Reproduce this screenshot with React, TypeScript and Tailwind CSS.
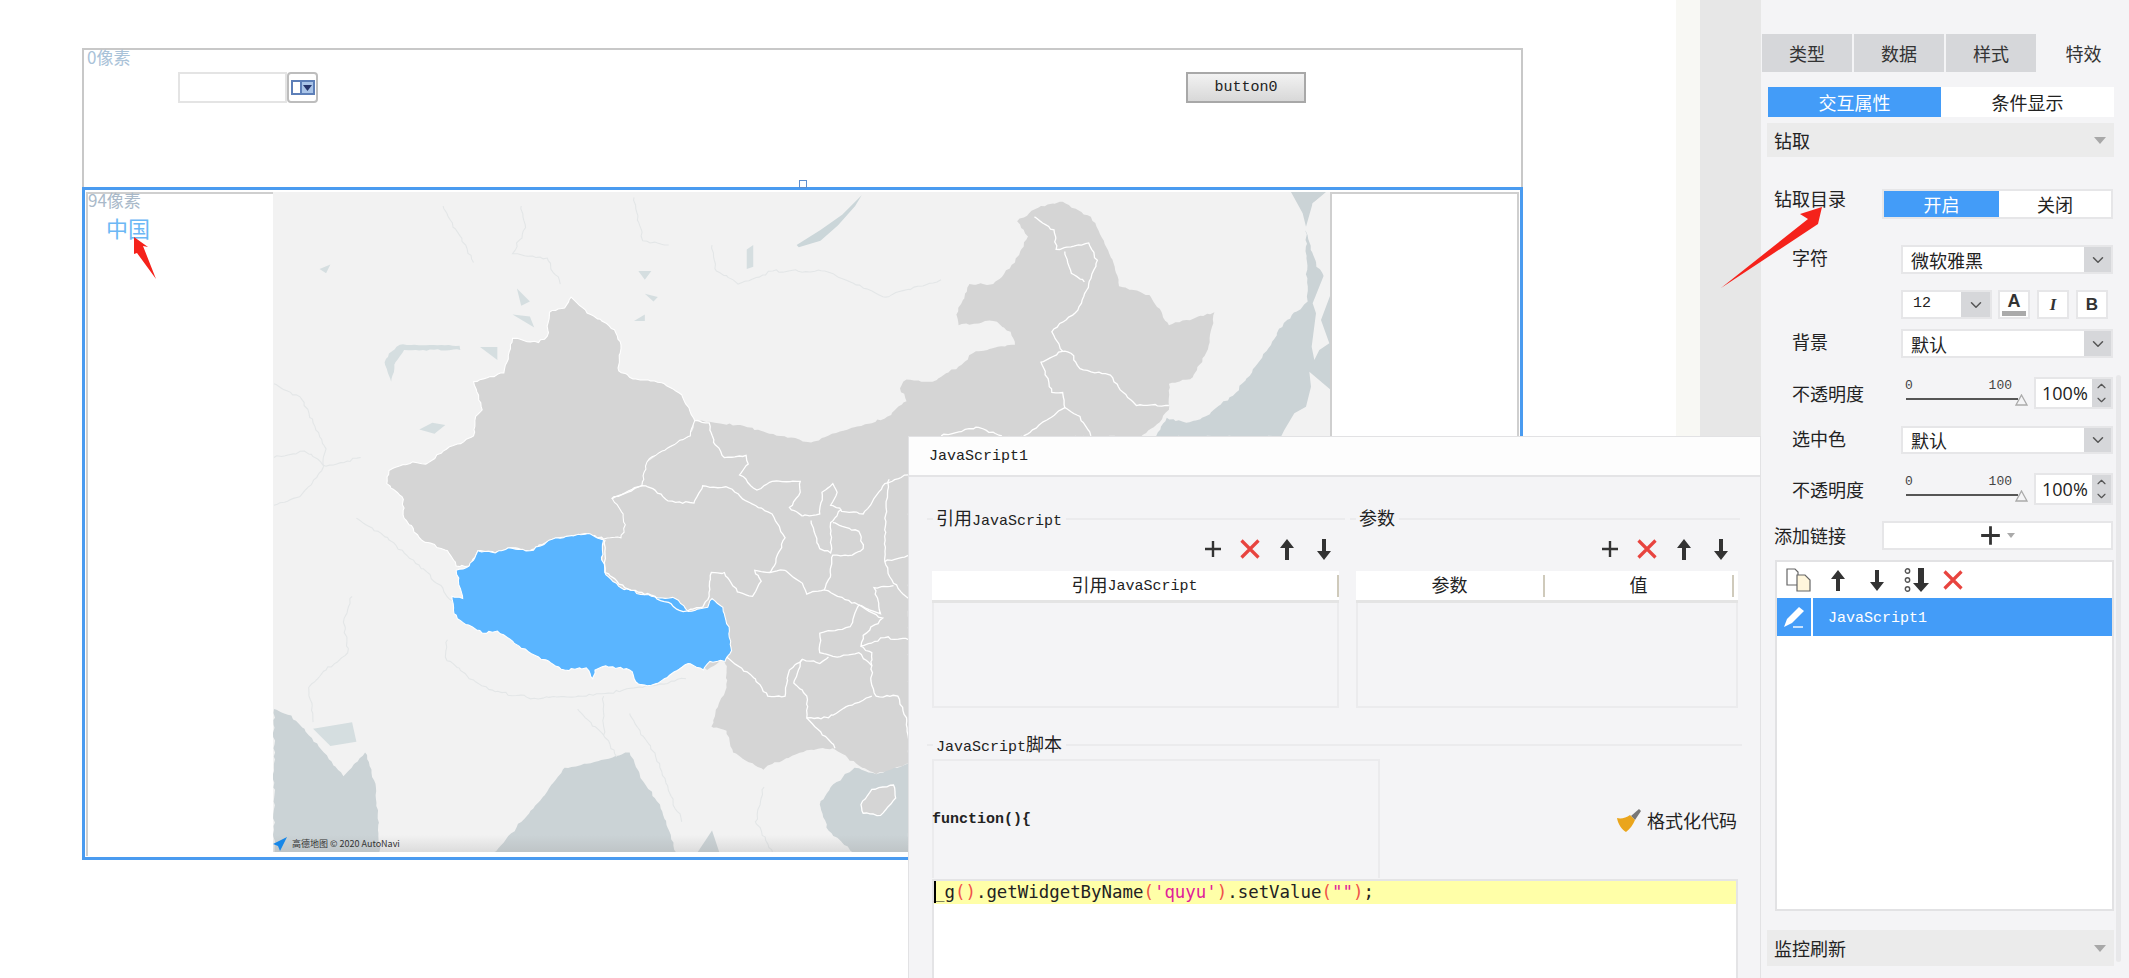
import { ChevronDown, ChevronUp } from "lucide-react";

const mono = "font-['Liberation_Mono','Noto_Sans_CJK_SC',monospace] text-[15px]";
const field = "border-2 border-[#e6e6e8] bg-white";

// turns a rough outline into a jagged map border, same result on every render
function rough(points: string, closed = false, amp = 2.5) {
  const n = points.trim().split(/\s+/).map(Number);
  const pts: number[][] = [];
  for (let i = 0; i < n.length; i += 2) pts.push([n[i], n[i + 1]]);
  if (closed) pts.push(pts[0]);
  let seed = 1;
  let d = `M${pts[0][0]} ${pts[0][1]}`;
  for (let i = 1; i < pts.length; i++) {
    const [ax, ay] = pts[i - 1];
    const [bx, by] = pts[i];
    const steps = Math.max(1, Math.ceil(Math.hypot(bx - ax, by - ay) / 9));
    for (let s = 1; s <= steps; s++) {
      const t = s / steps;
      seed += 1;
      const r1 = Math.sin(seed * 12.9898) * 43758.5453;
      const r2 = Math.sin(seed * 78.233) * 12543.123;
      const jx = s === steps ? 0 : (r1 - Math.floor(r1) - 0.5) * 2 * amp;
      const jy = s === steps ? 0 : (r2 - Math.floor(r2) - 0.5) * 2 * amp;
      d += `L${(ax + (bx - ax) * t + jx).toFixed(1)} ${(ay + (by - ay) * t + jy).toFixed(1)}`;
    }
  }
  return closed ? d + "Z" : d;
}

const xinjiang =
  "715 270 760 310 815 345 830 380 825 440 850 455 930 470 970 495 1000 555 990 590 960 605 925 625 890 650 878 705 810 735 835 770 840 795 830 825 790 828 755 815 680 825 620 855 570 848 540 860 500 855 480 890 450 890 430 855 370 830 330 780 325 730 290 700 295 670 350 650 380 655 420 625 490 590 495 545 510 530 490 465 560 445 580 365 640 375 660 360 665 305 700 295";
const tibet =
  "755 815 790 830 785 870 795 910 830 940 900 960 955 965 985 995 1030 985 1040 965 1065 985 1080 1040 1085 1085 1070 1110 1035 1110 1020 1130 985 1115 930 1150 900 1165 870 1162 850 1130 795 1120 770 1130 765 1150 750 1125 700 1130 640 1100 600 1080 545 1040 510 1045 465 1020 445 1000 440 960 465 965 450 900 480 890 500 855 540 860 570 848 620 855 680 825";
const chinaEast =
  "-180 830 -160 735 -90 705 -78 650 -43 625 -8 605 22 590 32 555 130 565 230 590 300 605 400 570 470 550 520 510 505 480 520 460 580 465 640 430 680 395 770 380 760 350 720 325 640 335 635 310 665 240 720 240 770 190 800 130 775 95 830 60 880 50 945 85 975 140 1000 200 1010 245 1080 265 1110 310 1125 335 1230 305 1215 390 1180 455 1125 470 1125 530 1090 570 1060 592 525 592 525 1345 450 1370 410 1350 350 1310 290 1315 200 1350 190 1360 165 1345 120 1320 105 1270 70 1260 85 1215 105 1170 105 1130 100 1100 60 1130 -30 1000 -180 960";

const provinces = [
  "32 555 65 560 75 605 100 640 150 635 155 655 135 680 175 715 210 695 275 695 275 720 250 755 280 775",
  "-160 735 -90 705 -60 715 -30 740 30 745 50 705 110 710 150 740 210 770 240 825 215 890 205 905",
  "-175 830 -175 905 -130 940 -60 960 5 995 50 985 65 960 70 905 100 905 130 950 165 960 185 925 170 900 205 905 240 900",
  "240 900 280 930 290 955 330 945 410 980 390 1030 320 1045 320 1090 360 1100 410 1090 440 1120 440 1165 450 1190 500 1190 520 1240 525 1290",
  "105 1100 160 1140 200 1190 240 1190 250 1130 280 1105 320 1115 340 1100",
  "280 1105 260 1160 290 1190 290 1240 340 1240 380 1215 440 1190",
  "290 1240 340 1290 355 1310",
  "280 775 320 770 325 720 350 700 360 720 345 750 380 765 420 770 470 700 525 680",
  "300 785 320 850 345 860 345 790 370 760",
  "480 690 470 780 470 880 490 930 525 965",
  "470 880 525 865",
  "350 790 410 810 420 850 395 865 350 865 345 910 330 945",
  "410 980 460 1000 445 940 490 935",
  "410 980 465 1010 420 1050 415 1075 470 1055 525 1060",
  "440 1120 440 1090 415 1075",
  "815 85 860 115 865 160 940 145 960 185 940 240 915 300 855 350 880 395 900 400 920 435 990 450 1020 490 1050 520 1125 520",
  "885 165 900 215 930 235",
  "880 395 830 420 855 490 880 490 885 525 790 590",
  "885 525 920 545 945 590",
  "600 590 680 570 740 590",
];

const rivers = [
  "30 470 90 500 120 560 150 620 140 670 90 730 30 750",
  "220 780 270 810 330 860 390 910 440 970",
  "430 1060 425 1100 480 1150 540 1180 630 1195 750 1190 880 1170 980 1150",
  "210 960 190 1020 200 1090 150 1130 110 1170 120 1250",
  "790 1190 790 1280 820 1330",
  "730 1220 790 1280",
  "850 1230 910 1330 970 1480",
  "420 60 490 190",
  "600 60 610 110 580 170 660 180 690 240",
  "860 40 880 140 940 150",
  "1040 150 1050 210 1100 240 1180 210 1300 210 1440 270 1568 230",
  "30 640 100 625 150 660 230 640",
  "1100 1130 1080 1220 1050 1250",
  "1160 1400 1140 1480 1180 1552",
];

function Plus({ size = 18 }: { size?: number }) {
  return (
    <svg width={size} height={size} viewBox="0 0 18 18">
      <path d="M9 1v16M1 9h16" stroke="#333" strokeWidth="2.4" />
    </svg>
  );
}

function Cross() {
  return (
    <svg width="20" height="20" viewBox="0 0 20 20">
      <path d="M1.5 1.500l17 17M18.500 1.500l-17 17" stroke="#e8443f" strokeWidth="3.2" />
    </svg>
  );
}

function ArrowUp() {
  return (
    <svg width="16" height="21" viewBox="0 0 16 21">
      <path d="M8 0l7 9H10v12H6V9H1z" fill="#333" />
    </svg>
  );
}

function ArrowDown() {
  return (
    <svg width="16" height="21" viewBox="0 0 16 21">
      <path d="M8 21l7-9H10V0H6v12H1z" fill="#333" />
    </svg>
  );
}

function MoveBottom() {
  return (
    <svg width="26" height="24" viewBox="0 0 26 24">
      <circle cx="3.500" cy="3" r="2.200" fill="none" stroke="#555" strokeWidth="1.400" />
      <circle cx="3.500" cy="12" r="2.200" fill="none" stroke="#555" strokeWidth="1.400" />
      <circle cx="3.500" cy="21" r="2.200" fill="none" stroke="#555" strokeWidth="1.400" />
      <path d="M17 24l8-9h-5V0h-6v15H9z" fill="#333" />
    </svg>
  );
}

function CopyIcon() {
  return (
    <svg width="25" height="24" viewBox="0 0 25 24">
      <path d="M1 1h8l3 3v13H1z" fill="#fff" stroke="#666" strokeWidth="1.200" />
      <path d="M11 7h8l5 5v11H11z" fill="#fff6dc" stroke="#666" strokeWidth="1.200" />
    </svg>
  );
}

function Pencil() {
  return (
    <svg width="22" height="22" viewBox="0 0 22 22">
      <path d="M16 1l5 4L9 17l-8 4 3-8z" fill="#fff" />
      <path d="M10 21h10" stroke="#fff" strokeWidth="1.400" />
    </svg>
  );
}

function Brush() {
  return (
    <svg width="24" height="23" viewBox="0 0 24 23">
      <path d="M14 7l8-7 2 2-6 9z" fill="#777" />
      <path d="M0 9c4 1 9 0 13-3l5 5c-2 5-5 9-9 12C5 21 1 15 0 9z" fill="#eaa51c" />
    </svg>
  );
}

function Caret() {
  return (
    <svg width="12" height="7" viewBox="0 0 12 7">
      <path d="M0 0h12L6 7z" fill="#a8a8a8" />
    </svg>
  );
}

function Legend({ children, trail }: { children: React.ReactNode; trail: string }) {
  return (
    <div className={`flex items-center h-[18px] ${trail}`}>
      <div className="w-[6px] h-[2px] bg-[#ebebed]" />
      <div className={`${mono} ml-[3px] mr-[4px] pt-[3px] leading-[18px] text-[#222] whitespace-nowrap`}>{children}</div>
      <div className="flex-1 h-[2px] bg-[#ebebed]" />
    </div>
  );
}

function ToolRow({ className }: { className: string }) {
  return (
    <div className={`flex items-center h-[22px] ${className}`}>
      <div className="w-[37px] flex justify-center"><Plus /></div>
      <div className="w-[37px] flex justify-center"><Cross /></div>
      <div className="w-[37px] flex justify-center"><ArrowUp /></div>
      <div className="w-[37px] flex justify-center"><ArrowDown /></div>
    </div>
  );
}

function Select({ value }: { value: string }) {
  return (
    <div className={`${field} w-[212px] h-full flex items-center justify-between ml-[140px]`}>
      <span className="pl-[8px] text-[18px] leading-none">{value}</span>
      <div className="w-[27px] h-full bg-[#d6d7da] flex items-center justify-center">
        <ChevronDown size={18} color="#555" />
      </div>
    </div>
  );
}

function LabeledSelect({ label, value, className }: { label: string; value: string; className: string }) {
  return (
    <div className={`relative flex ${className}`}>
      <span className="absolute left-[31px] top-[1px] text-[18px] leading-[22px]">{label}</span>
      <Select value={value} />
    </div>
  );
}

function OpacityRow({ className }: { className: string }) {
  return (
    <div className={`flex h-[32px] ${className}`}>
      <span className="ml-[31px] w-[112px] text-[18px] leading-[32px]">不透明度</span>
      <div className="w-[130px] h-full relative">
        <div className="flex justify-between w-[108px] pl-[1px] text-[13px] leading-[14px] text-[#444] font-['Liberation_Mono',monospace] pt-[2px]">
          <span>0</span>
          <span>100</span>
        </div>
        <div className="absolute left-[2px] top-[21px] w-[112px] h-[2px] bg-[#555]" />
        <svg className="absolute left-[111px] top-[17px]" width="13" height="12" viewBox="0 0 13 12">
          <path d="M6.500 1L12 11H1z" fill="#f4f4f6" stroke="#aaa" strokeWidth="1.300" />
        </svg>
      </div>
      <div className="w-[79px] h-full flex border-2 border-[#e6e6e8] bg-white">
        <span className="flex-1 pl-[6px] text-[18px] leading-[28px] text-[#222] font-['Open_Sans',sans-serif]">100%</span>
        <div className="w-[19px] bg-[#d6d7da] flex flex-col items-center justify-center">
          <ChevronUp size={15} color="#555" />
          <ChevronDown size={15} color="#555" />
        </div>
      </div>
    </div>
  );
}

function ChinaMap() {
  return (
    <svg className="block w-full h-full" viewBox="272 192 1057 660" preserveAspectRatio="none">
      <defs>
        <linearGradient id="mapFade" x1="0" y1="0" x2="0" y2="1">
          <stop offset="0" stopColor="#9a9a9a" stopOpacity="0" />
          <stop offset="1" stopColor="#9a9a9a" stopOpacity="0.25" />
        </linearGradient>
      </defs>
      <rect x="272" y="192" width="1057" height="660" fill="#f2f2f2" />
      <g transform="translate(260 180) scale(0.4337)">
        {/* seas */}
        <path d={rough("30 1220 70 1235 110 1280 145 1320 190 1375 240 1320 265 1400 275 1560 30 1560", true)} fill="#cbd3d6" />
        <path d={rough("530 1560 600 1480 660 1410 700 1355 760 1345 850 1320 880 1385 920 1440 945 1510 960 1560", true)} fill="#cbd3d6" />
        <path d="M1000 1560l40-60 20 60z" fill="#cbd3d6" />
        {/* lakes */}
        <path d="M1235 150L1290 115 1340 80 1385 35 1370 60 1330 105 1290 140 1240 155z" fill="#cbd6d9" />
        <path d={rough("285 420 300 465 310 420 330 392 460 392 458 382 320 380 295 400", true, 1.500)} fill="#d5dee0" />
        <path d="M365 575l30-15 30 5-25 20zM580 310l50 30-10-25zM590 250l30 30-20 10zM870 210l30 0-15 20zM135 205l25-10-10 20zM1120 160l15-10 0 50-15 5zM860 325l25-15 0 15zM885 262l30 8-10 10zM505 385l40 30 0-30zM120 1265l90-15 10 45-60 10z" fill="#d5dee0" />
        {/* rivers and neighbour borders */}
        <g fill="none" stroke="#e3e6e7" strokeWidth="2.500">
          {rivers.map((r) => (
            <path key={r} d={rough(r, false, 3)} />
          ))}
        </g>
      </g>
      <g transform="translate(680 180) scale(0.4337)">
        {/* east seas */}
        <path d={rough("1440 110 1465 200 1500 240 1500 592 1095 592 1120 548 1165 560 1210 545 1280 490 1340 410 1390 330 1445 280", true)} fill="#cbd3d6" />
        <path d={rough("320 1440 345 1400 400 1355 450 1370 525 1345 525 1560 410 1560 340 1500", true)} fill="#cbd3d6" />
        {/* China */}
        <path d={rough(chinaEast, true)} fill="#d5d5d5" />
        <path d={rough("415 1440 440 1405 490 1395 495 1425 460 1465 420 1460", true, 1.500)} fill="#d5d5d5" stroke="#fff" strokeWidth="3" />
      </g>
      <g transform="translate(1280 180) scale(0.3333)" fill="#f2f2f2">
        <path fill="#cbd3d6" d="M30 36H135L95 70 75 140 65 100z" />
        <path d="M95 70L85 140 105 190 135 270 95 370 105 400 92 500 100 540 115 510 145 490 120 420 150 340V36H140z" />
        <path d="M85 575L150 630V770H0L10 750 40 700 75 680 90 620z" />
      </g>
      <g transform="translate(260 180) scale(0.4337)">
        <path d={rough(xinjiang, true)} fill="#d5d5d5" stroke="#fff" strokeWidth="2.500" />
        <path d={rough(tibet, true)} fill="#5ab5ff" stroke="#fff" strokeWidth="2.500" />
      </g>
      <g transform="translate(680 180) scale(0.4337)" fill="none" stroke="#fff" strokeWidth="3">
        {provinces.map((p) => (
          <path key={p} d={rough(p)} />
        ))}
      </g>
      <rect x="272" y="835" width="1057" height="17" fill="url(#mapFade)" />
    </svg>
  );
}

function Canvas() {
  return (
    <div className="w-[1676px] shrink-0 pt-[48px] pl-[82px]">
      <div className="relative w-[1441px] h-[139px] border-t-2 border-x-2 border-[#c8c8c8] pl-[94px] pt-[22px] flex items-start">
        <span className="absolute left-[3px] top-[-3px] text-[17px] leading-[20px] text-[#a9c2d8]">0像素</span>
        <div className="w-[109px] h-[31px] border-2 border-[#e4e4e4]" />
        <div className="w-[31px] h-[31px] border-2 border-[#bdbdbd] rounded-[4px] flex items-center justify-center">
          <div className="w-[24px] h-[15px] border-2 border-[#5d7fb8] flex">
            <div className="w-[9px] bg-white border-r-2 border-[#5d7fb8]" />
            <div className="flex-1 bg-[#a9c4e8] flex items-center justify-center">
              <svg width="9" height="6" viewBox="0 0 9 6"><path d="M0 0h9L4.500 6z" fill="#26356b" /></svg>
            </div>
          </div>
        </div>
        <div className={`${mono} ml-[868px] w-[120px] h-[31px] border-2 border-[#a8a8a8] bg-gradient-to-b from-[#f2f2f2] to-[#d8d8d8] text-center leading-[28px] text-[#222]`}>
          button0
        </div>
        <div className="absolute left-[715px] bottom-[-1px] w-[8px] h-[8px] border border-[#5d8fd0] bg-white" />
      </div>
      <div className="w-[1441px] h-[673px] border-[3px] border-[#4a9bf0] flex bg-white">
        <div className="relative w-[188px] border-l-2 border-t-2 border-[#cfcfcf] ml-[1px] mt-[2px] mb-[1px]">
          <span className="absolute left-[0px] top-[-4px] text-[17px] leading-[20px] text-[#a9b9c9]">94像素</span>
          <span className="absolute left-[18px] top-[19px] text-[22px] leading-[28px] text-[#6cb8f5]">中国</span>
        </div>
        <div className="relative w-[1057px] mt-[2px] mb-[5px] -ml-[1px]">
          <ChinaMap />
          <div className="absolute left-0 bottom-[1px] flex items-center gap-[5px]">
            <svg width="14" height="14" viewBox="0 0 14 14"><path d="M14 0L0 7l5 2 2 5z" fill="#1787e8" /></svg>
            <span className="text-[9px] leading-[12px] text-[#333]">高德地图 © 2020 AutoNavi</span>
          </div>
        </div>
        <div className="flex-1 border-2 border-[#cfcfcf] mt-[2px] mb-[1px] mr-[1px]" />
      </div>
    </div>
  );
}

function Panel() {
  return (
    <div className="flex-1 bg-[#f4f4f6] pt-[34px] relative">
      <div className="flex gap-[2px] h-[38px] pl-[1px] text-[18px] text-[#333] text-center leading-[38px]">
        <div className="w-[90px] bg-[#d6d7da]">类型</div>
        <div className="w-[90px] bg-[#d6d7da]">数据</div>
        <div className="w-[90px] bg-[#d6d7da]">样式</div>
        <div className="w-[91px]">特效</div>
      </div>
      <div className="flex ml-[7px] w-[346px] h-[30px] mt-[15px] text-[18px] text-center leading-[30px]">
        <div className="flex-1 bg-[#439cf8] text-white">交互属性</div>
        <div className="flex-1 bg-white text-[#222]">条件显示</div>
      </div>
      <div className="flex items-center justify-between ml-[6px] w-[347px] h-[34px] mt-[6px] bg-[#ebebeb] pl-[7px] pr-[8px] text-[18px] text-[#222]">
        <span>钻取</span>
        <Caret />
      </div>
      <div className="flex h-[30px] mt-[32px] ml-[13px] text-[18px]">
        <span className="w-[108px] leading-[18px] text-[#222]">钻取目录</span>
        <div className="w-[231px] flex border-2 border-[#e6e6e8] text-center leading-[26px]">
          <div className="w-[115px] bg-[#439cf8] text-white">开启</div>
          <div className="flex-1 bg-white text-[#222]">关闭</div>
        </div>
      </div>
      <LabeledSelect label="字符" value="微软雅黑" className="h-[29px] mt-[26px]" />
      <div className="flex h-[29px] mt-[16px] ml-[140px] gap-[6px]">
        <div className={`${field} w-[91px] flex items-center justify-between`}>
          <span className="pl-[10px] text-[15px] font-['Liberation_Mono',monospace] text-[#222]">12</span>
          <div className="w-[29px] h-full bg-[#d6d7da] flex items-center justify-center"><ChevronDown size={18} color="#555" /></div>
        </div>
        <div className={`${field} w-[32px] flex flex-col items-center leading-none`}>
          <span className="text-[18px] font-bold font-['Liberation_Sans',sans-serif] leading-[18px] text-[#333]">A</span>
          <div className="w-[24px] h-[5px] bg-[#aaa] mt-[1px]" />
        </div>
        <div className={`${field} ml-[1px] w-[32px] flex items-center justify-center text-[17px] italic font-bold font-['Liberation_Serif',serif] text-[#333]`}>I</div>
        <div className={`${field} ml-[1px] w-[32px] flex items-center justify-center text-[17px] font-bold font-['Liberation_Sans',sans-serif] text-[#333]`}>B</div>
      </div>
      <LabeledSelect label="背景" value="默认" className="h-[29px] mt-[10px]" />
      <OpacityRow className="mt-[19px]" />
      <LabeledSelect label="选中色" value="默认" className="h-[28px] mt-[17px]" />
      <OpacityRow className="mt-[19px]" />
      <div className="flex h-[29px] mt-[16px] ml-[13px] text-[18px]">
        <span className="w-[108px] leading-[29px] text-[#222]">添加链接</span>
        <div className={`${field} w-[231px] flex items-center justify-center gap-[6px]`}>
          <Plus size={21} />
          <svg width="8" height="5" viewBox="0 0 8 5"><path d="M0 0h8L4 5z" fill="#aaa" /></svg>
        </div>
      </div>
      <div className="ml-[14px] w-[339px] h-[351px] mt-[10px] border-2 border-[#e2e2e4] bg-white">
        <div className="flex items-center h-[36px] pl-[9px]">
          <div className="w-[39px]"><CopyIcon /></div>
          <div className="w-[39px] pl-[5px]"><ArrowUp /></div>
          <div className="w-[39px] pl-[5px]"><ArrowDown /></div>
          <div className="w-[40px] pl-[1px]"><MoveBottom /></div>
          <Cross />
        </div>
        <div className="flex h-[38px] bg-[#439cf8] text-white">
          <div className="w-[36px] border-r-2 border-white flex items-center justify-center"><Pencil /></div>
          <span className={`${mono} pl-[15px] leading-[41px]`}>JavaScript1</span>
        </div>
      </div>
      <div className="flex items-center justify-between ml-[6px] w-[347px] h-[36px] mt-[19px] bg-[#ebebeb] pl-[7px] pr-[8px] text-[18px] text-[#222]">
        <span>监控刷新</span>
        <Caret />
      </div>
      {/* panel scrollbar */}
      <div className="absolute left-[355px] top-[375px] w-[5px] h-[587px] rounded-full bg-[#e8e8ea]" />
    </div>
  );
}

function HeaderCell({ children, className }: { children: React.ReactNode; className: string }) {
  return (
    <div className={`${mono} flex items-center justify-center h-[22px] pt-[3px] border-r-2 border-[#cfcabb] ${className}`}>
      {children}
    </div>
  );
}

function ScriptDialog() {
  return (
    <div className="absolute left-[908px] top-[436px] w-[853px] h-[542px] bg-[#f4f4f6] border-l border-t border-r border-[#e2e2e4] overflow-hidden text-[#222]">
      <div className={`${mono} h-[40px] bg-[#fdfdfd] border-b-2 border-[#e4e4e6] pl-[20px] leading-[40px]`}>JavaScript1</div>
      <div className="pt-[33px]">
        <div className="flex">
          <div className="w-[441px]">
            <Legend trail="ml-[18px] w-[418px]"><span className="text-[18px]">引用</span>JavaScript</Legend>
            <ToolRow className="justify-end w-[433px] mt-[10px]" />
            <div className="ml-[23px] w-[407px] mt-[11px]">
              <div className="h-[32px] bg-white border-b-[3px] border-[#e4e4e4] flex items-center">
                <HeaderCell className="flex-1"><span className="text-[18px]">引用</span>JavaScript</HeaderCell>
              </div>
              <div className="h-[105px] border-2 border-t-0 border-[#ebebed]" />
            </div>
          </div>
          <div className="flex-1">
            <Legend trail="w-[390px]"><span className="text-[18px]">参数</span></Legend>
            <ToolRow className="justify-end w-[389px] mt-[10px]" />
            <div className="ml-[6px] w-[382px] mt-[11px]">
              <div className="h-[32px] bg-white border-b-[3px] border-[#e4e4e4] flex items-center">
                <HeaderCell className="w-[189px]"><span className="text-[18px]">参数</span></HeaderCell>
                <HeaderCell className="w-[189px]"><span className="text-[18px]">值</span></HeaderCell>
              </div>
              <div className="h-[105px] border-2 border-t-0 border-[#ebebed]" />
            </div>
          </div>
        </div>
        <div className="mt-[28px]">
          <Legend trail="ml-[18px] w-[815px]">JavaScript<span className="text-[18px]">脚本</span></Legend>
        </div>
        <div className="ml-[23px] w-[805px] flex h-[119px] mt-[5px]">
          <div className={`${mono} w-[448px] border-2 border-b-0 border-[#ebebed] flex items-center leading-none font-bold`}>
            <span className="-ml-[2px]">function(){"{"}</span>
          </div>
          <div className="flex-1 flex items-center justify-end gap-[6px] text-[18px] pt-[3px]">
            <Brush />
            <span>格式化代码</span>
          </div>
        </div>
        <div className="ml-[23px] w-[806px] h-[120px] mt-[1px] bg-white border-2 border-[#e4e4e6]">
          <div className="relative h-[23px] bg-[#ffffa8] text-[17.4px] leading-[23px] whitespace-nowrap text-[#222] font-['DejaVu_Sans_Mono',monospace]">
            <span className="absolute left-0 top-0 w-[2px] h-[22px] bg-black" />
            _g<span className="text-[#f0524a]">()</span>.getWidgetByName<span className="text-[#f0524a]">(</span>
            <span className="text-[#e0209a]">'quyu'</span>
            <span className="text-[#f0524a]">)</span>.setValue<span className="text-[#f0524a]">(</span>
            <span className="text-[#e0209a]">""</span>
            <span className="text-[#f0524a]">)</span>;
          </div>
        </div>
      </div>
    </div>
  );
}

export default function App() {
  return (
    <div className="relative w-[2129px] h-[978px] overflow-hidden bg-white flex text-[#222] font-['Noto_Sans_CJK_SC',sans-serif]">
      <Canvas />
      <div className="w-[24px] bg-[#f8f8f4]" />
      <div className="w-[61px] bg-[#e7e7e7]" />
      <Panel />
      <ScriptDialog />
      {/* red annotation arrows */}
      <svg className="absolute left-0 top-0 pointer-events-none" width="2129" height="978" viewBox="0 0 2129 978">
        <path d="M134 237l14 10-5-1 13 33-19-26-3 1z" fill="#f5221b" />
        <path d="M1822 207l-22 7 8 5-87 69 94-62 3-2z" fill="#f5221b" />
      </svg>
    </div>
  );
}
